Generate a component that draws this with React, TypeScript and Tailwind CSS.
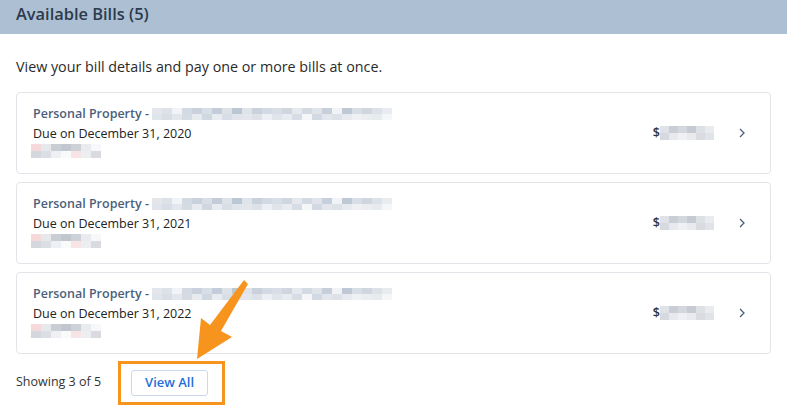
import React from "react";

const titleCells = [
  "#e3e7ec", "#dde2e9", "#f1f3f6", "#d3dae3", "#c9d1dc", "#d8dee6", "#c3ccd8", "#dde2e9", "#bcc7d4", "#dfe4ea", "#c9d1dc", "#d3dae3",
  "#d8dee6", "#cfd6e0", "#e5e9ee", "#d3dae3", "#dfe4ea", "#c6cfda", "#f1f3f6", "#bfc9d6", "#d8dee6", "#cfd6e0", "#dde2e9", "#e8ebf0",
];
const subCells = ["#f6d9da", "#e6e8ec", "#c9cdd4", "#c2c7cf", "#cdd1d8", "#e9ebee", "#f7f8f9"];
const amountCells = ["#dfe2e7", "#c9cdd5", "#d4d8de", "#c6cad2", "#dde0e5", "#e9ebee"];

function Pixels({ cells, cell, h }: { cells: string[]; cell: number; h: number }) {
  return (
    <div className="flex flex-col">
      <div className="flex">
        {cells.map((c, i) => (
          <div key={i} style={{ backgroundColor: c, width: cell, height: h / 2 }} />
        ))}
      </div>
      <div className="flex opacity-70">
        {cells.map((c, i) => (
          <div key={i} style={{ backgroundColor: cells[(i + 3) % cells.length], width: cell, height: h / 2 }} />
        ))}
      </div>
    </div>
  );
}

function Bill({ year }: { year: string }) {
  return (
    <div className="flex items-center h-[82px] rounded-[4px] border border-[#e1e5ea] bg-white pl-4 pr-[24px]">
      <div className="flex flex-1 flex-col mb-[4px]">
        <div className="flex items-center h-[19px]">
          <span className="text-[12.5px] font-semibold text-[#4b5f7c]">Personal Property -&nbsp;</span>
          <Pixels cells={titleCells} cell={10} h={12} />
        </div>
        <div className="text-[12.5px] leading-[19px] text-[#222]">Due on December 31, {year}</div>
        <div className="mt-[1px] -ml-[2px]">
          <Pixels cells={subCells} cell={10} h={14} />
        </div>
      </div>
      <div className="flex items-center">
        <span className="text-[12.5px] font-semibold text-[#333]">$</span>
        <Pixels cells={amountCells} cell={9} h={14} />
      </div>
      <svg width="8" height="12" viewBox="0 0 8 12" className="ml-[24px]">
        <path d="M2 2 L6 6 L2 10" fill="none" stroke="#4b5f7c" strokeWidth="1.3" />
      </svg>
    </div>
  );
}

export default function App() {
  return (
    <div className="relative w-[787px] h-[411px] overflow-hidden bg-white" style={{ fontFamily: '"Open Sans", "Liberation Sans", sans-serif' }}>
      <div className="flex items-center h-[34px] bg-[#adc0d3] px-4 pb-[5px]">
        <h2 className="text-[16.4px] font-semibold text-[#2c3a4d]">Available Bills (5)</h2>
      </div>
      <div className="px-4">
        <p className="mt-[23px] text-[14.3px] leading-[20px] text-[#2a2a2a]">View your bill details and pay one or more bills at once.</p>
        <div className="mt-[15px] flex flex-col gap-[8px] w-[755px]">
          <Bill year="2020" />
          <Bill year="2021" />
          <Bill year="2022" />
        </div>
        <div className="mt-[15px] flex items-center">
          <span className="text-[12.5px] text-[#333]">Showing 3 of 5</span>
          <div className="relative ml-[30px]">
            <button className="h-[26px] w-[77px] rounded-[3px] border border-[#cbd9ee] bg-white text-[13px] font-semibold text-[#1f6fd9]">
              View All
            </button>
            <div className="absolute left-[-13px] top-[-8px] h-[44px] w-[107px] border-[3px] border-[#f7941d]" />
          </div>
        </div>
      </div>
      <svg className="absolute left-0 top-0" width="787" height="411" viewBox="0 0 787 411">
        <polygon points="244,280 248,284 221,331 232,337 197,359 201,318 210,325" fill="#f7941d" />
      </svg>
    </div>
  );
}
